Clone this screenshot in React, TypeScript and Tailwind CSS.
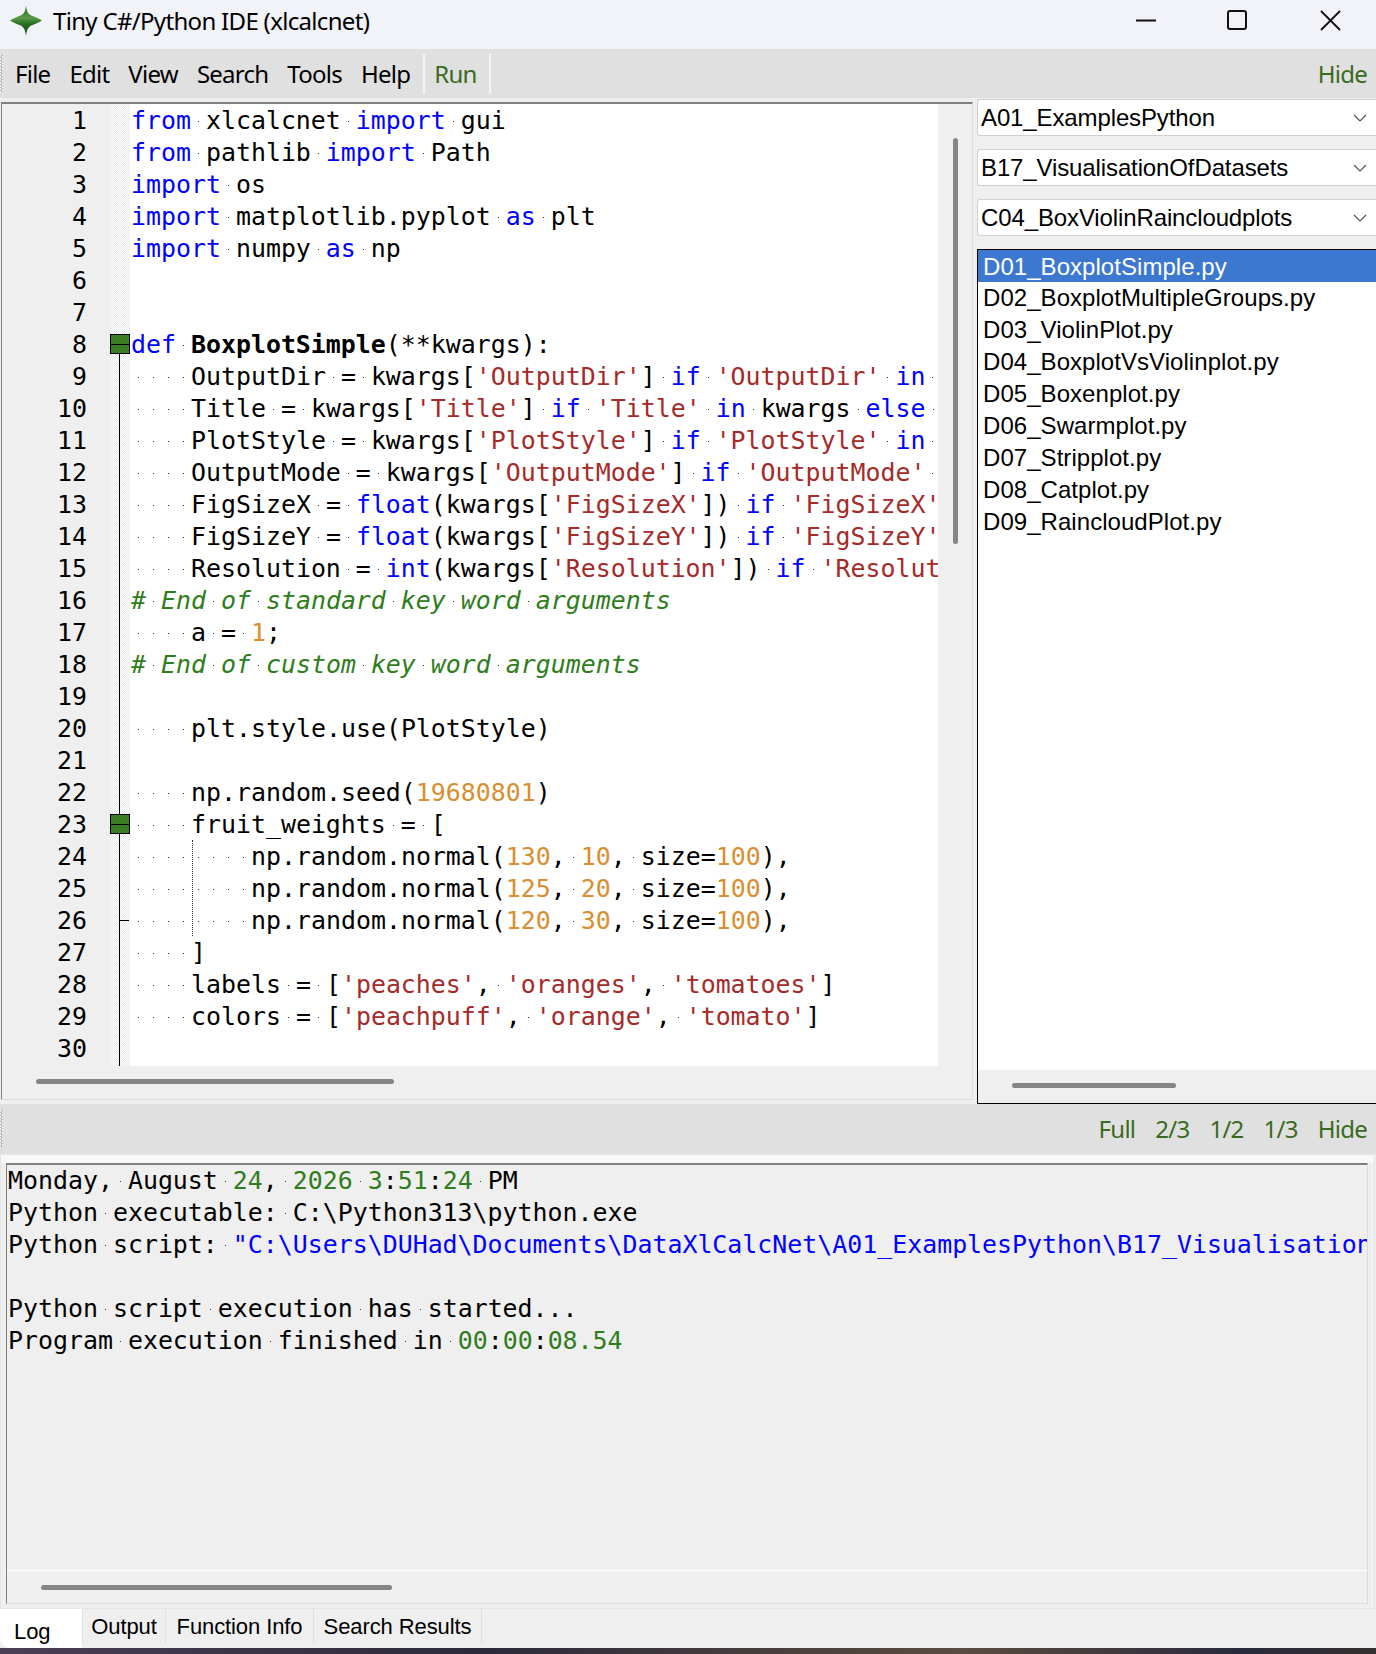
import React from "react"

const code: string[] = [
	"from xlcalcnet import gui",
	"from pathlib import Path",
	"import os",
	"import matplotlib.pyplot as plt",
	"import numpy as np",
	"",
	"",
	"def BoxplotSimple(**kwargs):",
	"    OutputDir = kwargs['OutputDir'] if 'OutputDir' in kwargs else None",
	"    Title = kwargs['Title'] if 'Title' in kwargs else 'Boxplot'",
	"    PlotStyle = kwargs['PlotStyle'] if 'PlotStyle' in kwargs else None",
	"    OutputMode = kwargs['OutputMode'] if 'OutputMode' in kwargs else None",
	"    FigSizeX = float(kwargs['FigSizeX']) if 'FigSizeX' in kwargs else 5",
	"    FigSizeY = float(kwargs['FigSizeY']) if 'FigSizeY' in kwargs else 5",
	"    Resolution = int(kwargs['Resolution']) if 'Resolution' in kwargs else 100",
	"# End of standard key word arguments",
	"    a = 1;",
	"# End of custom key word arguments",
	"",
	"    plt.style.use(PlotStyle)",
	"",
	"    np.random.seed(19680801)",
	"    fruit_weights = [",
	"        np.random.normal(130, 10, size=100),",
	"        np.random.normal(125, 20, size=100),",
	"        np.random.normal(120, 30, size=100),",
	"    ]",
	"    labels = ['peaches', 'oranges', 'tomatoes']",
	"    colors = ['peachpuff', 'orange', 'tomato']",
	"",
]

const keywords = ["from", "import", "as", "def", "if", "in", "else", "float", "int", "None"]

const Blank = ({ children }: { children: string }) => (
	<span className="bg-[linear-gradient(#333,#333)] bg-no-repeat bg-[length:1px_1px] bg-[position:center_52%]">
		{children}
	</span>
)

// splits plain text so every space shows its whitespace dot
const withDots = (text: string) =>
	text.split(/( )/).map((part, i) => (part === " " ? <Blank key={i}> </Blank> : part))

const CodeLine = ({ text }: { text: string }) => {
	if (text.startsWith("#")) {
		return <span className="italic text-[#2f7d1c]">{withDots(text)}</span>
	}
	const parts = text.split(/('[^']*'|\b\d+\b|\b[A-Za-z_]+\b| )/).filter(Boolean)
	return (
		<>
			{parts.map((part, i) => {
				if (part === " ") return <Blank key={i}> </Blank>
				if (part.startsWith("'")) return <span key={i} className="text-[#a52a2a]">{part}</span>
				if (/^\d+$/.test(part)) return <span key={i} className="text-[#d98e32]">{part}</span>
				if (keywords.includes(part)) return <span key={i} className="text-[#0000ff]">{part}</span>
				if (part === "BoxplotSimple") return <span key={i} className="font-bold">{part}</span>
				return <span key={i}>{part}</span>
			})}
		</>
	)
}

const LogText = ({ text }: { text: string }) => {
	const parts = text.split(/(\b\d+\b| )/).filter(Boolean)
	return (
		<>
			{parts.map((part, i) => {
				if (part === " ") return <Blank key={i}> </Blank>
				if (/^\d+$/.test(part)) return <span key={i} className="text-[#2f7d1c]">{part}</span>
				return <span key={i}>{part}</span>
			})}
		</>
	)
}

const Plain = ({ text }: { text: string }) => <>{withDots(text)}</>

const FoldBox = ({ line }: { line: number }) => (
	<div
		className={`absolute left-0 flex h-[20px] w-[20px] items-center border border-black bg-[#3a7d24] ${
			line === 8 ? "top-[230px]" : "top-[710px]"
		}`}
	>
		<div className="h-px w-full bg-black" />
	</div>
)

const Thumb = ({ className }: { className: string }) => (
	<div className={`rounded-full bg-[#858585] ${className}`} />
)

const Combo = ({ label }: { label: string }) => (
	<div className="flex h-[37px] items-center justify-between rounded-l-[3px] border border-r-0 border-[#d0d0d0] bg-white pl-[3px] pr-[9px] text-[24px] tracking-[-0.12px] text-black">
		<span>{label}</span>
		<svg width="14" height="8" viewBox="0 0 14 8" fill="none" stroke="#555" strokeWidth="1.2">
			<path d="M1 1l6 6 6-6" />
		</svg>
	</div>
)

const files = [
	"D01_BoxplotSimple.py",
	"D02_BoxplotMultipleGroups.py",
	"D03_ViolinPlot.py",
	"D04_BoxplotVsViolinplot.py",
	"D05_Boxenplot.py",
	"D06_Swarmplot.py",
	"D07_Stripplot.py",
	"D08_Catplot.py",
	"D09_RaincloudPlot.py",
]

const Grip = () => (
	<div className="h-[38px] w-[3px] shrink-0 bg-[repeating-conic-gradient(#bbb_0_25%,#f4f4f4_0_50%)] bg-[length:3px_3px]" />
)

export default function App() {
	return (
		<div className="flex h-[1654px] w-[1376px] flex-col overflow-hidden bg-[#efefef] font-['Noto_Sans',sans-serif] text-black">
			{/* title bar */}
			<div className="flex h-[49px] shrink-0 items-center bg-[#f2f2f9] pb-[8px]">
				<svg className="ml-[10px]" width="32" height="32" viewBox="0 0 32 32">
					<defs>
						<linearGradient id="logo" x1="0" y1="0" x2="0" y2="1">
							<stop offset="0" stopColor="#1f5a18" />
							<stop offset="0.42" stopColor="#5a9a48" />
							<stop offset="0.6" stopColor="#2c6e22" />
							<stop offset="1" stopColor="#174a12" />
						</linearGradient>
					</defs>
					<path d="M16 0C16.600 7 18 10 24 11.500C27 12.500 30 14.500 32 15.500C30 16.500 27 18.500 24 19.500C18 21 16.800 25 16 31C15.200 25 14 21 8 19.500C5 18.500 2 16.500 0 15.500C2 14.500 5 12.500 8 11.500C14 10 15.400 7 16 0Z" fill="url(#logo)" />
				</svg>
				<span className="ml-[11px] text-[24px] tracking-[-0.68px]">Tiny C#/Python IDE (xlcalcnet)</span>
				<div className="ml-auto flex items-center">
					<svg width="21" height="21" viewBox="0 0 21 21" className="mr-[70px]" fill="none" stroke="#111" strokeWidth="2">
						<path d="M0 10.500H20" />
					</svg>
					<svg width="21" height="21" viewBox="0 0 21 21" className="mr-[72px]" fill="none" stroke="#111" strokeWidth="2">
						<rect x="1" y="1" width="18" height="18" rx="2" />
					</svg>
					<svg width="21" height="21" viewBox="0 0 21 21" className="mr-[35px]" fill="none" stroke="#111" strokeWidth="1.800">
						<path d="M1 1l19 19M20 1L1 20" />
					</svg>
				</div>
			</div>

			{/* menu */}
			<div className="flex h-[49px] shrink-0 items-center bg-[#e0e0e0] text-[24px] tracking-[-0.75px]">
				<Grip />
				<div className="ml-[12px] flex gap-[19px]">
					<span>File</span>
					<span>Edit</span>
					<span>View</span>
					<span>Search</span>
					<span>Tools</span>
					<span>Help</span>
				</div>
				<div className="ml-[13px] flex h-[40px] w-[68px] items-center border-x-2 border-[#f2f2f2] pl-[9px] text-[#3a6a1e]">Run</div>
				<span className="ml-auto mr-[9px] text-[#3a6a1e]">Hide</span>
			</div>

			{/* editor + file browser */}
			<div className="flex h-[1006px] shrink-0">
				<div className="flex w-[973px] shrink-0 flex-col pl-[1px] pt-[4px]">
					<div className="flex h-[998px] flex-col border-b border-l border-r border-t-2 border-b-[#dcdcdc] border-l-[#808080] border-r-[#dcdcdc] border-t-[#808080]">
						<div className="flex h-[962px] shrink-0">
							<div className="flex h-full w-[936px] shrink-0 overflow-hidden bg-white font-['DejaVu_Sans_Mono',monospace] text-[24.9px] leading-[32px] text-black">
								<div className="w-[108px] shrink-0 bg-[#efefef] pr-[23px] pt-[1px] text-right">
									{code.map((_, i) => (
										<div key={i} className="h-[32px]">{i + 1}</div>
									))}
								</div>
								<div className="relative w-[20px] shrink-0 bg-[repeating-conic-gradient(#e8e8e8_0_25%,#fff_0_50%)] bg-[length:2px_2px]">
									<div className="absolute bottom-0 left-[9px] top-[240px] w-px bg-black" />
									<div className="absolute left-[10px] top-[816px] h-px w-[9px] bg-black" />
									<FoldBox line={8} />
									<FoldBox line={23} />
								</div>
								<div className="relative min-w-0 flex-1 overflow-hidden whitespace-pre pl-[1px] pt-[1px]">
									{code.map((line, i) => (
										<div key={i} className="h-[32px]"><CodeLine text={line} /></div>
									))}
									<div className="absolute left-[62px] top-[736px] h-[96px] border-l border-dotted border-[#333]" />
								</div>
							</div>
							<div className="flex-1 pt-[34px]">
								<Thumb className="ml-[15px] h-[406px] w-[5px]" />
							</div>
						</div>
						<div className="flex h-[34px] items-start pl-[34px] pt-[13px]">
							<Thumb className="h-[5px] w-[358px]" />
						</div>
					</div>
				</div>

				<div className="flex min-w-0 flex-1 flex-col pl-[4px] pt-[1px] font-['Liberation_Sans',sans-serif]">
					<div className="flex flex-col gap-[13px]">
						<Combo label="A01_ExamplesPython" />
						<Combo label="B17_VisualisationOfDatasets" />
						<Combo label="C04_BoxViolinRaincloudplots" />
					</div>
					<div className="mt-[13px] flex h-[855px] flex-col border-b border-l border-t border-black">
						<div className="h-[820px] shrink-0 bg-white pt-px text-[24px] leading-[32px] tracking-[0.05px]">
							{files.map((name, i) => (
								<div key={name} className={`h-[32px] pl-[5px] ${i === 0 ? "-mt-px bg-[#3c78d0] pt-px text-white" : ""}`}>{name}</div>
							))}
						</div>
						<div className="pl-[34px] pt-[13px]">
							<Thumb className="h-[5px] w-[164px]" />
						</div>
					</div>
				</div>
			</div>

			{/* log toolbar */}
			<div className="flex h-[50px] shrink-0 items-center bg-[#e0e0e0] text-[24px] tracking-[-0.75px] text-[#3a6a1e]">
				<Grip />
				<div className="ml-auto mr-[9px] flex gap-[20px]">
					<span>Full</span>
					<span>2/3</span>
					<span>1/2</span>
					<span>1/3</span>
					<span>Hide</span>
				</div>
			</div>

			{/* log */}
			<div className="mr-[1px] flex h-[455px] shrink-0 flex-col border border-[#e4e4e4]">
				<div className="h-[8px] shrink-0 bg-[#f8f8f8]" />
				<div className="mb-[4px] ml-[5px] mr-[6px] flex min-h-0 flex-1 flex-col border-b border-l border-r border-t-2 border-b-[#dcdcdc] border-l-[#808080] border-r-[#dcdcdc] border-t-[#808080]">
					<div className="h-[406px] shrink-0 overflow-hidden whitespace-pre border-b border-white pl-[1px] font-['DejaVu_Sans_Mono',monospace] text-[24.9px] leading-[32px]">
						<div className="h-[32px]"><LogText text="Monday, August 24, 2026 3:51:24 PM" /></div>
						<div className="h-[32px]"><Plain text="Python executable: C:\Python313\python.exe" /></div>
						<div className="h-[32px]">
							<Plain text="Python script: " />
							<span className="text-[#0000ff]">"C:\Users\DUHad\Documents\DataXlCalcNet\A01_ExamplesPython\B17_VisualisationOfDatasets\C04_BoxViolinRaincloudplots\D01_BoxplotSimple.py"</span>
						</div>
						<div className="h-[32px]" />
						<div className="h-[32px]"><Plain text="Python script execution has started..." /></div>
						<div className="h-[32px]">
							<Plain text="Program execution finished in " />
							<span className="text-[#2f7d1c]">00</span>:<span className="text-[#2f7d1c]">00</span>:<span className="text-[#2f7d1c]">08.54</span>
						</div>
					</div>
					<div className="pl-[34px] pt-[14px]">
						<Thumb className="h-[5px] w-[351px]" />
					</div>
				</div>
			</div>

			{/* tabs */}
			<div className="flex h-[39px] shrink-0 bg-[#efefef] font-['Liberation_Sans',sans-serif] text-[22px] tracking-[-0.1px]">
				<div className="flex w-[82px] items-center rounded-bl-[10px] bg-white pl-[14px] pt-[5px]">Log</div>
				<div className="flex h-[34px] w-[84px] items-center justify-center border-x border-[#e0e0e0]">Output</div>
				<div className="flex h-[34px] w-[148px] items-center justify-center border-r border-[#e0e0e0]">Function Info</div>
				<div className="flex h-[34px] w-[168px] items-center justify-center border-r border-[#e0e0e0]">Search Results</div>
			</div>

			{/* desktop wallpaper peeking through below the window */}
			<div className="flex-1 bg-[linear-gradient(90deg,#4a3f55_0%,#2c2a3a_35%,#5a4c40_70%,#2a2a3c_90%,#33302f_100%)]" />
		</div>
	)
}
